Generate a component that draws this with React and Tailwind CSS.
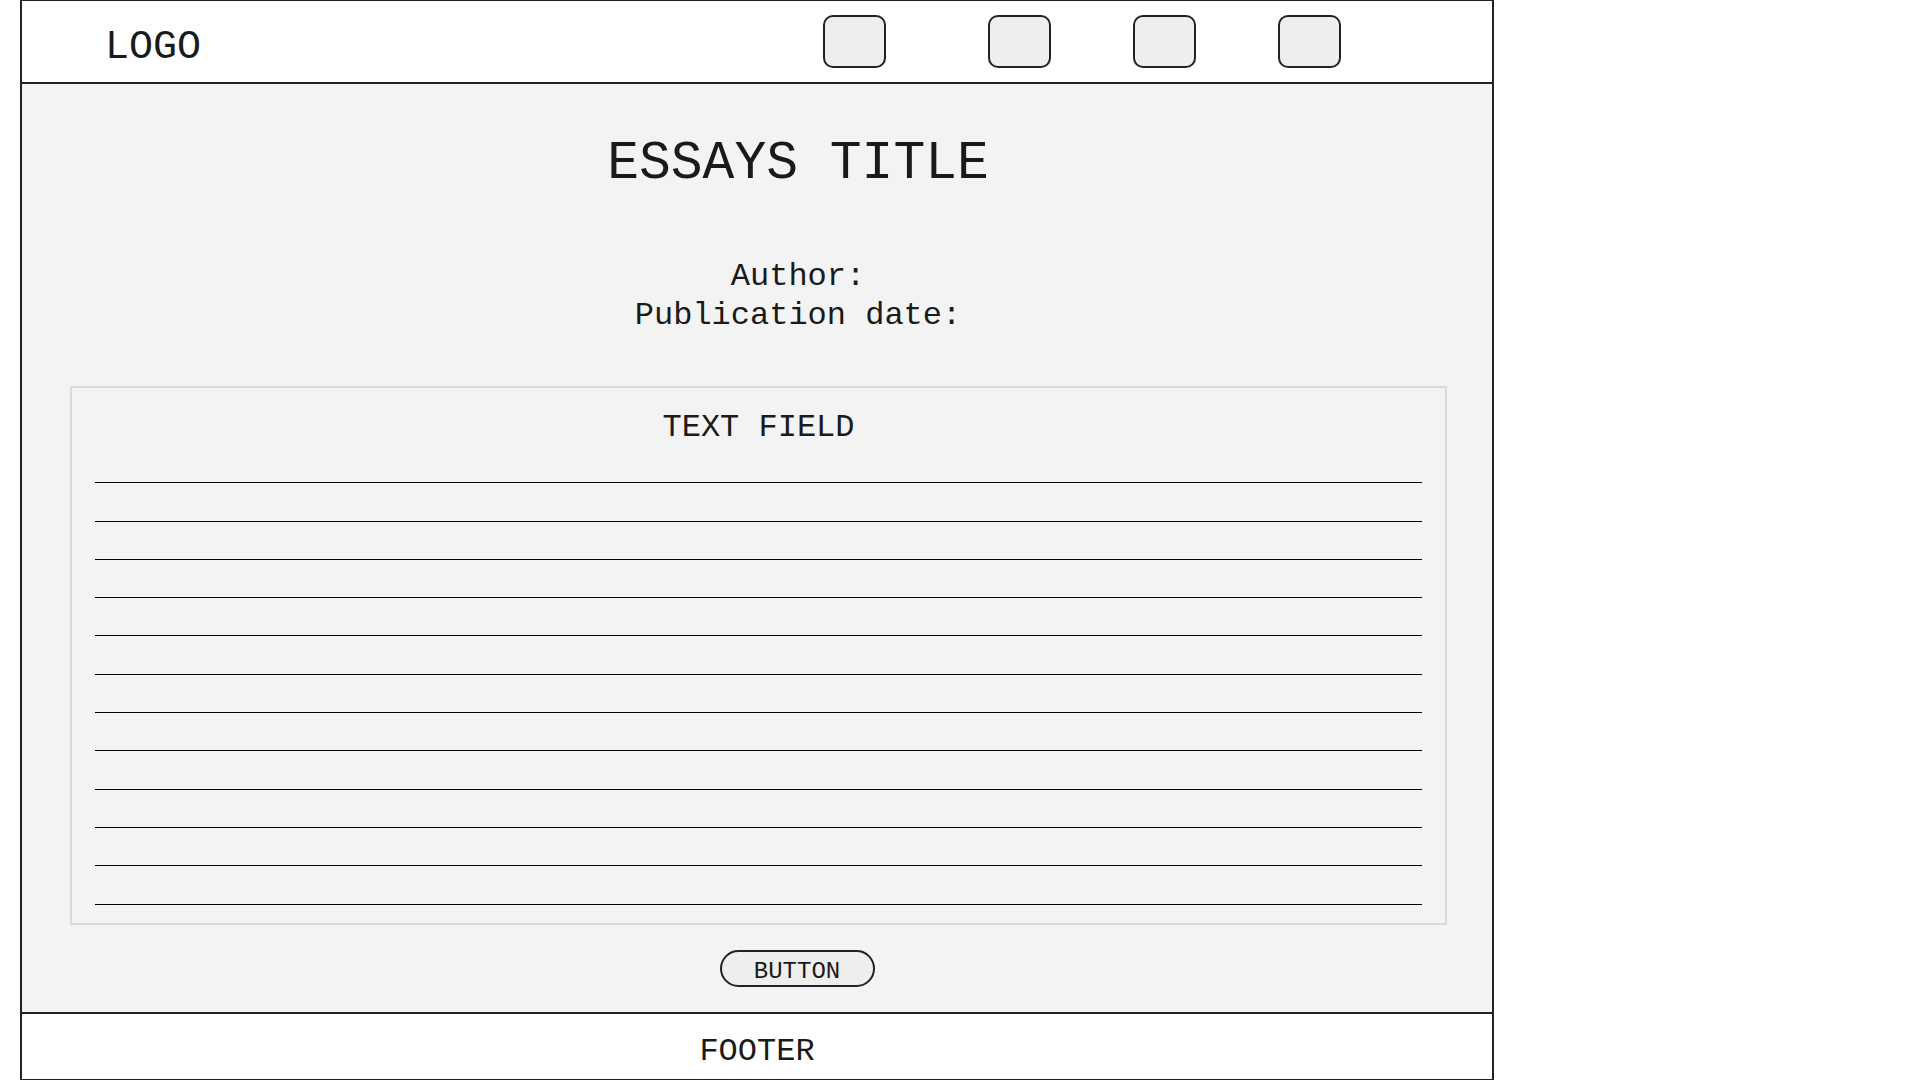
const navButtons = [0, 1, 2, 3];
const rows = Array.from({ length: 12 }, (_, i) => i);

const App = () => {
  return (
    <div className="min-h-screen bg-white" style={{ fontFamily: '"Liberation Mono", "Courier New", monospace' }}>
      <div className="ml-[20px] w-[1474px] h-[1080px] flex flex-col border-l-2 border-r-2 border-t border-b border-[#222] text-[#1a1a1a]">
        {/* Header */}
        <header className="h-[83px] shrink-0 flex items-center bg-white border-b-2 border-[#222]">
          <div className="self-start pt-[24px] pl-[83px] text-[40px] leading-[46px]">LOGO</div>
          <nav className="ml-auto mr-[151px] flex items-center">
            {navButtons.map((b) => (
              <button
                key={b}
                type="button"
                className={`w-[63px] h-[53px] rounded-[10px] border-2 border-[#222] bg-[#eeeeee] ${
                  b === 0 ? "" : b === 1 ? "ml-[102px]" : "ml-[82px]"
                }`}
              />
            ))}
          </nav>
        </header>

        {/* Main */}
        <main className="flex-1 flex flex-col bg-[#f3f3f3] pt-[50px]">
          <div className="pl-[82px] text-center">
            <h1 className="text-[53px] leading-[60px] font-normal">ESSAYS TITLE</h1>
            <div className="mt-[63px] text-[32px] leading-[39px]">
              <p>Author:</p>
              <p>Publication date:</p>
            </div>
          </div>

          {/* Text field */}
          <div className="mt-[51px] ml-[48px] w-[1377px] border-2 border-[#dadada] px-[23px] pt-[23px] pb-[18px]">
            <p className="text-center text-[32px] leading-[34px]">TEXT FIELD</p>
            <div className="flex flex-col">
              {rows.map((r) => (
                <div key={r} className="h-[38.3px] border-b border-black" />
              ))}
            </div>
          </div>

          <div className="mt-[25px] pl-[80px] flex justify-center">
            <button
              type="button"
              className="w-[155px] h-[37px] rounded-full border-2 border-[#222] bg-[#eeeeee] pt-[7px] text-[24px] leading-none flex items-center justify-center"
            >
              BUTTON
            </button>
          </div>
        </main>

        {/* Footer */}
        <footer className="h-[67px] shrink-0 bg-white border-t-2 border-[#222] pt-[18px] text-center text-[32px] leading-[39px]">
          FOOTER
        </footer>
      </div>
    </div>
  );
};

export default App;
